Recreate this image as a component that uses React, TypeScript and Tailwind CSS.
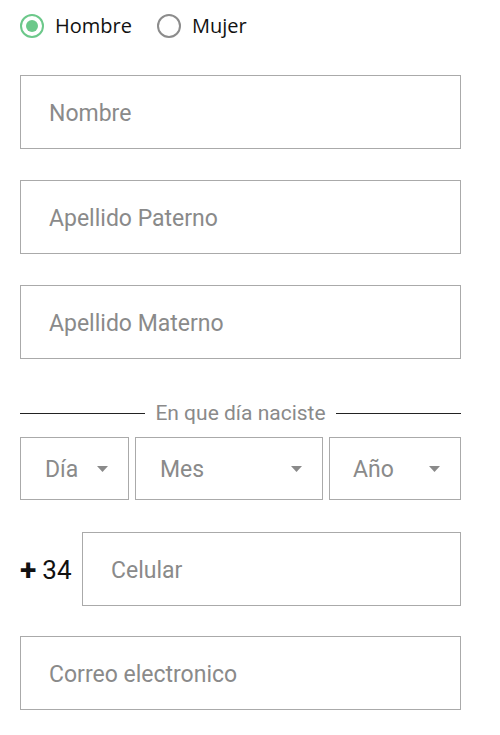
import React from 'react';

const font = { fontFamily: 'Roboto, "Liberation Sans", sans-serif' };

const Field: React.FC<{ placeholder: string; className?: string }> = ({ placeholder, className = '' }) => (
  <div className={`h-[74px] border border-[#aaaaaa] flex items-center pl-7 pt-[5px] ${className}`}>
    <span className="text-[23px] text-[#8a8a8a]">{placeholder}</span>
  </div>
);

const Caret = () => (
  <svg width="11" height="6" viewBox="0 0 11 6" className="shrink-0">
    <path d="M0 0 L11 0 L5.5 6 Z" fill="#8a8a8a" />
  </svg>
);

const Select: React.FC<{ label: string; className: string }> = ({ label, className }) => (
  <div className={`h-[63px] border border-[#aaaaaa] flex items-center justify-between ${className}`}>
    <span className="text-[23px] text-[#8a8a8a] pt-[4px]">{label}</span>
    <Caret />
  </div>
);

const Radio: React.FC<{ checked?: boolean; label: string }> = ({ checked, label }) => (
  <label className="flex items-center gap-[11px]">
    <span
      className={`w-[24px] h-[24px] rounded-full border-[2.5px] flex items-center justify-center ${
        checked ? 'border-[#6cc88a]' : 'border-[#8c8c8c]'
      }`}
    >
      {checked && <span className="w-[12px] h-[12px] rounded-full bg-[#6cc88a]" />}
    </span>
    <span className="text-[20px] text-[#111]" style={{ fontFamily: '"Open Sans", "Noto Sans", sans-serif' }}>
      {label}
    </span>
  </label>
);

export default function App() {
  return (
    <div className="w-[500px] h-[735px] bg-white px-5 pt-[13px]" style={font}>
      <div className="w-[441px]">
        <div className="flex items-center gap-[25px] h-[26px]">
          <Radio checked label="Hombre" />
          <Radio label="Mujer" />
        </div>

        <div className="mt-[36px] flex flex-col gap-[31px]">
          <Field placeholder="Nombre" />
          <Field placeholder="Apellido Paterno" />
          <Field placeholder="Apellido Materno" />
        </div>

        <div className="mt-[44px] flex items-center gap-[10px] h-[21px]">
          <div className="flex-1 h-px bg-[#222]" />
          <span className="text-[21px] text-[#8a8a8a] leading-none">En que día naciste</span>
          <div className="flex-1 h-px bg-[#222]" />
        </div>

        <div className="mt-[13px] flex gap-[6px]">
          <Select label="Día" className="w-[109px] pl-6 pr-5" />
          <Select label="Mes" className="w-[188px] pl-6 pr-5" />
          <Select label="Año" className="flex-1 pl-[23px] pr-5" />
        </div>

        <div className="mt-[32px] flex items-center">
          <div className="w-[62px] flex items-center text-[26px] text-[#111] pt-[2px]">
            <span className="font-bold text-[30px] leading-none mr-[6px]">+</span>
            <span className="leading-none">34</span>
          </div>
          <Field placeholder="Celular" className="flex-1 h-[73px]" />
        </div>

        <Field placeholder="Correo electronico" className="mt-[30px]" />
      </div>
    </div>
  );
}
